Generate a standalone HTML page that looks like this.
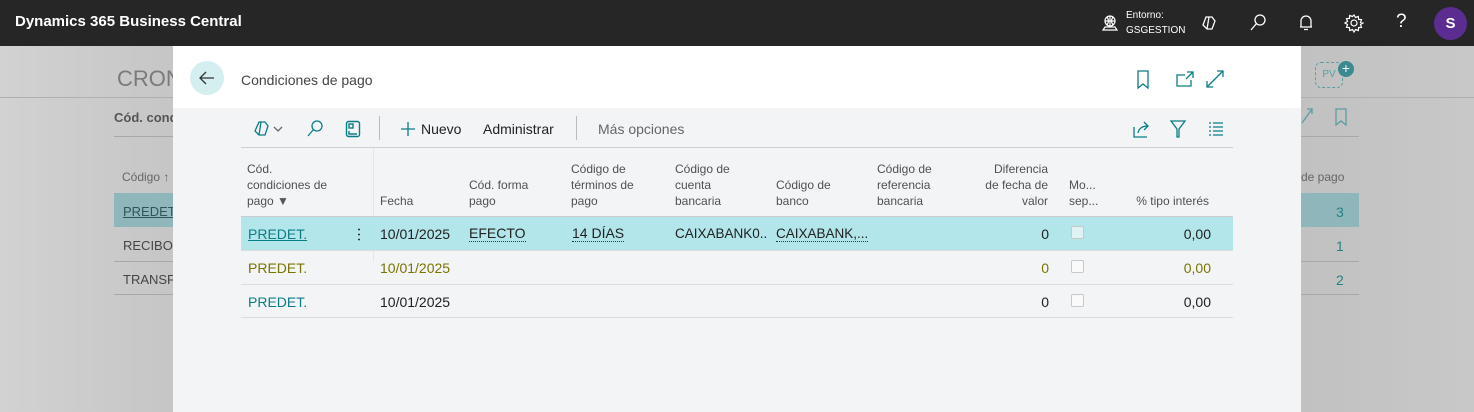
<!DOCTYPE html>
<html><head><meta charset="utf-8"><style>
*{margin:0;padding:0;box-sizing:border-box}
body{width:1474px;height:412px;overflow:hidden;font-family:"Liberation Sans",sans-serif;background:#c4c4c4;position:relative;font-size:13px;color:#212121}
.a{position:absolute;white-space:nowrap}
.top{position:absolute;left:0;top:0;width:1474px;height:46px;background:#262626}
.bg{position:absolute;left:0;top:46px;width:1474px;height:366px;background:linear-gradient(90deg,#d2d2d2,#bdbdbd 20%,#bcbcbc 80%,#c8c8c8)}
.dlg{position:absolute;left:173px;top:46px;width:1128px;height:366px;background:#f3f4f6}
.hd{position:absolute;left:0;top:0;width:1128px;height:62px;background:#fff}
.hl{position:absolute;height:1px;background:#dcdcdc}
.t{color:#0a7e85}
.y{color:#7a7400}
.th{position:absolute;font-size:12px;color:#505050;line-height:16px}
.cb{position:absolute;width:13px;height:13px;border:1px solid #c8c8c8;border-radius:2px;background:#fafafa}
</style></head><body>
<div class="top"></div>
<div class="a" style="left:15px;top:13px;color:#fff;font-weight:bold;font-size:15px">Dynamics 365 Business Central</div>
<svg class="a" style="left:1101px;top:14px" width="18" height="18" viewBox="0 0 18 18" fill="none" stroke="#fff" stroke-width="1.2"><circle cx="9" cy="7" r="5"/><path d="M4 7h10M9 2v10M6 3c2 3 2 5 0 8M12 3c-2 3-2 5 0 8M2 16h14l-2-3H4z"/></svg>
<div class="a" style="left:1126px;top:10px;color:#fff;font-size:10px">Entorno:</div>
<div class="a" style="left:1126px;top:25px;color:#fff;font-size:10px">GSGESTION</div>
<svg class="a" style="left:1200px;top:14px" width="18" height="18" viewBox="0 0 18 18" fill="none" stroke="#fff" stroke-width="1.3"><path d="M7 3h5l3 4-3 8H7L3 11l3-8z M9 3l-2 12"/></svg>
<svg class="a" style="left:1249px;top:13px" width="18" height="20" viewBox="0 0 18 20" fill="none" stroke="#fff" stroke-width="1.3"><circle cx="11" cy="7" r="5"/><path d="M7.5 10.5L2 17"/></svg>
<svg class="a" style="left:1297px;top:13px" width="18" height="20" viewBox="0 0 18 20" fill="none" stroke="#fff" stroke-width="1.3"><path d="M4 14V8a5 5 0 0110 0v6H3h12M7 16.5h4"/></svg>
<svg class="a" style="left:1344px;top:13px" width="20" height="20" viewBox="0 0 20 20" fill="none" stroke="#fff" stroke-width="1.2"><circle cx="10" cy="10" r="3"/><path d="M10 2l1.5 2.5 2.8-1 .3 2.9 2.9.3-1 2.8L19 10l-2.5 1.5 1 2.8-2.9.3-.3 2.9-2.8-1L10 19l-1.5-2.5-2.8 1-.3-2.9-2.9-.3 1-2.8L1 10l2.5-1.5-1-2.8 2.9-.3.3-2.9 2.8 1z"/></svg>
<div class="a" style="left:1396px;top:11px;color:#fff;font-size:19px">?</div>
<div class="a" style="left:1434px;top:7px;width:33px;height:33px;border-radius:50%;background:#5c2d91;color:#fff;font-weight:bold;text-align:center;line-height:33px;font-size:15px">S</div>

<div class="bg"></div>
<div class="a" style="left:117px;top:66px;font-size:22px;color:#7a7a7a">CRONO</div>
<div class="hl" style="left:0;top:97px;width:173px;background:#b0b0b0"></div>
<div class="hl" style="left:1301px;top:97px;width:173px;background:#b0b0b0"></div>
<div class="a" style="left:114px;top:110px;font-weight:bold;color:#555">Cód. cond</div>
<div class="hl" style="left:114px;top:136px;width:59px;background:#a8a8a8"></div>
<div class="a" style="left:122px;top:170px;font-size:12px;color:#666">Código ↑</div>
<div class="a" style="left:114px;top:193px;width:59px;height:34px;background:#8fb7bb"></div>
<div class="a" style="left:123px;top:204px;color:#2f5558;text-decoration:underline">PREDET.</div>
<div class="a" style="left:123px;top:238px;color:#444">RECIBO</div>
<div class="hl" style="left:114px;top:261px;width:59px;background:#a8a8a8"></div>
<div class="a" style="left:123px;top:272px;color:#444">TRANSF.</div>
<div class="hl" style="left:114px;top:294px;width:59px;background:#a8a8a8"></div>
<div class="a" style="left:1301px;top:170px;font-size:12px;color:#666">de pago</div>
<div class="a" style="left:1301px;top:193px;width:58px;height:34px;background:#8fb7bb"></div>
<div class="a" style="left:1336px;top:204px;color:#2a7f84;font-size:14px">3</div>
<div class="a" style="left:1336px;top:238px;color:#2a7f84;font-size:14px">1</div>
<div class="hl" style="left:1301px;top:261px;width:58px;background:#a8a8a8"></div>
<div class="a" style="left:1336px;top:272px;color:#2a7f84;font-size:14px">2</div>
<div class="hl" style="left:1301px;top:294px;width:58px;background:#a8a8a8"></div>
<div class="hl" style="left:1301px;top:136px;width:58px;background:#a8a8a8"></div>
<div class="a" style="left:1315px;top:62px;width:28px;height:26px;border:1.5px dashed #5a9ea3;border-radius:6px;color:#5a9ea3;font-size:10px;text-align:center;line-height:24px">PV</div>
<div class="a" style="left:1338px;top:61px;width:16px;height:16px;border-radius:50%;background:#3b8a8f;color:#fff;font-size:14px;text-align:center;line-height:15px">+</div>
<svg class="a" style="left:1334px;top:108px" width="14" height="18" viewBox="0 0 14 18" fill="none" stroke="#5a9ea3" stroke-width="1.3"><path d="M2 1h10v16l-5-4-5 4z"/></svg>
<svg class="a" style="left:1301px;top:108px" width="12" height="16" viewBox="0 0 12 16" fill="none" stroke="#5a9ea3" stroke-width="1.3"><path d="M1 15L11 1M6 1h5v5"/></svg>

<div class="dlg">
<div class="hd"></div>
<div class="a" style="left:17px;top:15px;width:34px;height:34px;border-radius:50%;background:#d5eef0"></div>
<svg class="a" style="left:25px;top:23px" width="18" height="18" viewBox="0 0 18 18" fill="none" stroke="#333" stroke-width="1.3"><path d="M16 9H2M8 3L2 9l6 6"/></svg>
<div class="a" style="left:68px;top:26px;font-size:14px;color:#444">Condiciones de pago</div>
<svg class="a" style="left:963px;top:24px" width="14" height="20" viewBox="0 0 14 20" fill="none" stroke="#0a7e85" stroke-width="1.3"><path d="M2 1h10v17l-5-4-5 4z"/></svg>
<svg class="a" style="left:1003px;top:25px" width="18" height="16" viewBox="0 0 18 16" fill="none" stroke="#0a7e85" stroke-width="1.3"><path d="M9 4H1v11h14V9M11 1h6v6M17 1l-7 7"/></svg>
<svg class="a" style="left:1033px;top:24px" width="18" height="18" viewBox="0 0 18 18" fill="none" stroke="#0a7e85" stroke-width="1.3"><path d="M1 17L17 1M11 1h6v6M1 11v6h6"/></svg>

<svg class="a" style="left:80px;top:74px" width="40" height="18" viewBox="0 0 40 18" fill="none" stroke="#0a7e85" stroke-width="1.3"><path d="M6 2h6l3 4-3 9H6L2 11z M8 2l-2 13"/><path d="M21 7l4 4 4-4" stroke="#666"/></svg>
<svg class="a" style="left:133px;top:73px" width="18" height="20" viewBox="0 0 18 20" fill="none" stroke="#0a7e85" stroke-width="1.3"><circle cx="11" cy="7" r="5"/><path d="M7.5 10.5L2 17"/></svg>
<svg class="a" style="left:172px;top:74px" width="16" height="18" viewBox="0 0 16 18" fill="none" stroke="#0a7e85" stroke-width="1.4"><rect x="1.5" y="1.5" width="13" height="15" rx="2"/><rect x="4" y="4" width="4" height="4"/><path d="M4 11v3h8"/></svg>
<div class="a" style="left:206px;top:70px;width:1px;height:24px;background:#bbb"></div>
<svg class="a" style="left:227px;top:75px" width="16" height="16" viewBox="0 0 16 16" stroke="#0a7e85" stroke-width="1.3"><path d="M8 1v14M1 8h14"/></svg>
<div class="a" style="left:248px;top:75px;font-size:14px">Nuevo</div>
<div class="a" style="left:310px;top:75px;font-size:14px">Administrar</div>
<div class="a" style="left:403px;top:70px;width:1px;height:24px;background:#bbb"></div>
<div class="a" style="left:425px;top:75px;font-size:14px;color:#666">Más opciones</div>
<svg class="a" style="left:960px;top:74px" width="18" height="18" viewBox="0 0 18 18" fill="none" stroke="#0a7e85" stroke-width="1.3"><path d="M1 7v10h13M5 13c1-5 5-7 10-7M11 2l4 4-4 4"/></svg>
<svg class="a" style="left:997px;top:74px" width="16" height="18" viewBox="0 0 16 18" fill="none" stroke="#0a7e85" stroke-width="1.3"><path d="M1 1h14L9 9v8H7V9z"/></svg>
<svg class="a" style="left:1035px;top:76px" width="16" height="14" viewBox="0 0 16 14" stroke="#0a7e85" stroke-width="1.3"><path d="M1 1h2M1 5h2M1 9h2M1 13h2M5 1h10M5 5h10M5 9h10M5 13h10"/></svg>

<div class="hl" style="left:68px;top:101px;width:992px;background:#d0d0d0"></div>
<div class="th" style="left:74px;top:115px">Cód.<br>condiciones de<br>pago <span style="color:#555">▼</span></div>
<div class="a" style="left:200px;top:102px;width:1px;height:114px;background:#e6e6e6"></div>
<div class="th" style="left:207px;top:147px">Fecha</div>
<div class="th" style="left:296px;top:131px">Cód. forma<br>pago</div>
<div class="th" style="left:398px;top:115px">Código de<br>términos de<br>pago</div>
<div class="th" style="left:502px;top:115px">Código de<br>cuenta<br>bancaria</div>
<div class="th" style="left:603px;top:131px">Código de<br>banco</div>
<div class="th" style="left:704px;top:115px">Código de<br>referencia<br>bancaria</div>
<div class="th" style="left:800px;top:115px;width:75px;text-align:right">Diferencia<br>de fecha de<br>valor</div>
<div class="th" style="left:896px;top:131px">Mo...<br>sep...</div>
<div class="th" style="left:940px;top:147px;width:96px;text-align:right">% tipo interés</div>
<div class="a" style="left:1058px;top:180px;width:1px;height:10px;background:#555"></div>
<div class="hl" style="left:68px;top:170px;width:992px;background:#ccc"></div>

<div class="a" style="left:68px;top:171px;width:992px;height:33px;background:#b2e6ea"></div>
<div class="hl" style="left:68px;top:204px;width:992px"></div>
<div class="hl" style="left:68px;top:238px;width:992px"></div>
<div class="hl" style="left:68px;top:271px;width:992px"></div>

<div class="a t" style="left:75px;top:180px;font-size:14px;text-decoration:underline">PREDET.</div>
<div class="a" style="left:185px;top:181px;width:2px;height:14px;background:radial-gradient(circle,#333 0.8px,transparent 1px) 0 0/2px 5px"></div>
<div class="a" style="left:207px;top:180px;font-size:14px">10/01/2025</div>
<div class="a" style="left:296px;top:180px;font-size:14px;border-bottom:1px dotted #333;line-height:15px">EFECTO</div>
<div class="a" style="left:399px;top:180px;font-size:14px;border-bottom:1px dotted #333;line-height:15px">14 DÍAS</div>
<div class="a" style="left:502px;top:180px;font-size:13.5px;width:92px;overflow:hidden">CAIXABANK0...</div>
<div class="a" style="left:603px;top:180px;font-size:13.5px;border-bottom:1px dotted #333;line-height:15px">CAIXABANK,...</div>
<div class="a" style="left:860px;top:180px;font-size:14px;width:16px;text-align:right">0</div>
<div class="cb" style="left:898px;top:180px;background:#dff3f4"></div>
<div class="a" style="left:980px;top:180px;font-size:14px;width:58px;text-align:right">0,00</div>

<div class="a y" style="left:75px;top:214px;font-size:14px">PREDET.</div>
<div class="a y" style="left:207px;top:214px;font-size:14px">10/01/2025</div>
<div class="a y" style="left:860px;top:214px;font-size:14px;width:16px;text-align:right">0</div>
<div class="cb" style="left:898px;top:214px"></div>
<div class="a y" style="left:980px;top:214px;font-size:14px;width:58px;text-align:right">0,00</div>

<div class="a t" style="left:75px;top:248px;font-size:14px">PREDET.</div>
<div class="a" style="left:207px;top:248px;font-size:14px">10/01/2025</div>
<div class="a" style="left:860px;top:248px;font-size:14px;width:16px;text-align:right">0</div>
<div class="cb" style="left:898px;top:248px"></div>
<div class="a" style="left:980px;top:248px;font-size:14px;width:58px;text-align:right">0,00</div>
</div>
</body></html>
